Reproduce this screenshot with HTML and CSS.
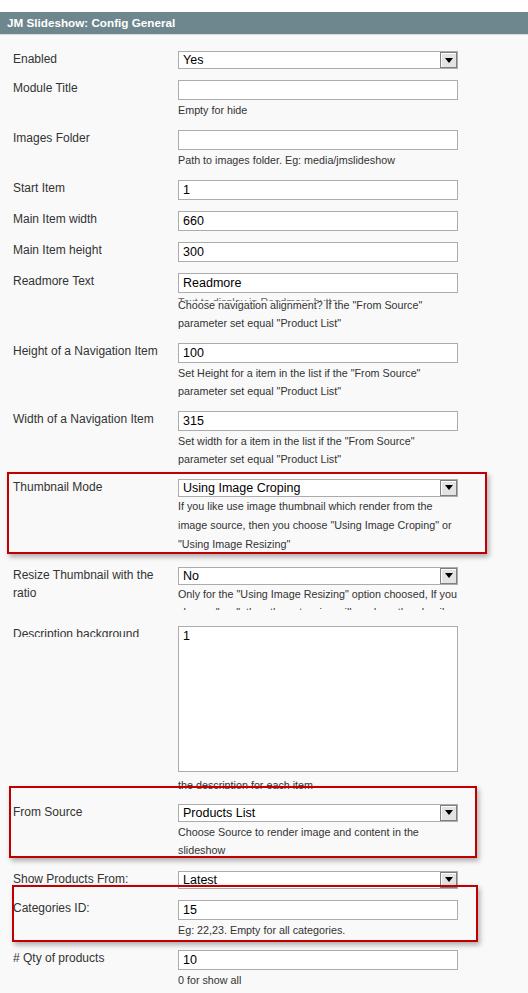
FILE: index.html
```html
<!DOCTYPE html>
<html lang="en">
<head>
    <meta charset="UTF-8">
    <meta name="viewport" content="width=device-width, initial-scale=1.0">
    <title>JM Slideshow: Config General</title>
    <link rel="stylesheet" href="styles.css">
</head>
<body>
<div class="page">
    <div class="section-head">JM Slideshow: Config General</div>

    <div class="form">
        <div class="row">
            <label class="label">Enabled</label>
            <div class="value">
                <div class="select"><span class="select-text">Yes</span><span class="arrow"><svg width="8" height="5" viewBox="0 0 8 5"><path d="M0 0H8L4 5Z" fill="#000"/></svg></span></div>
            </div>
        </div>

        <div class="row">
            <label class="label">Module Title</label>
            <div class="value">
                <input class="input" type="text" value="">
                <div class="hint">Empty for hide</div>
            </div>
        </div>

        <div class="row">
            <label class="label">Images Folder</label>
            <div class="value">
                <input class="input" type="text" value="">
                <div class="hint">Path to images folder. Eg: media/jmslideshow</div>
            </div>
        </div>

        <div class="row">
            <label class="label">Start Item</label>
            <div class="value"><input class="input" type="text" value="1"></div>
        </div>

        <div class="row">
            <label class="label">Main Item width</label>
            <div class="value"><input class="input" type="text" value="660"></div>
        </div>

        <div class="row">
            <label class="label">Main Item height</label>
            <div class="value"><input class="input" type="text" value="300"></div>
        </div>

        <div class="row">
            <label class="label">Readmore Text</label>
            <div class="value">
                <input class="input" type="text" value="Readmore">
                <div class="hint hint-stack">
                    <span class="hint-ghost">Text to display in Readmore button</span>
                    Choose navigation alignment? If the "From Source"<br>parameter set equal "Product List"
                </div>
            </div>
        </div>

        <div class="row">
            <label class="label">Height of a Navigation Item</label>
            <div class="value">
                <input class="input" type="text" value="100">
                <div class="hint">Set Height for a item in the list if the "From Source"<br>parameter set equal "Product List"</div>
            </div>
        </div>

        <div class="row">
            <label class="label">Width of a Navigation Item</label>
            <div class="value">
                <input class="input" type="text" value="315">
                <div class="hint">Set width for a item in the list if the "From Source"<br>parameter set equal "Product List"</div>
            </div>
        </div>

        <div class="row">
            <label class="label">Thumbnail Mode</label>
            <div class="value">
                <div class="select"><span class="select-text">Using Image Croping</span><span class="arrow"><svg width="8" height="5" viewBox="0 0 8 5"><path d="M0 0H8L4 5Z" fill="#000"/></svg></span></div>
                <div class="hint hint-loose">If you like use image thumbnail which render from the<br>image source, then you choose "Using Image Croping" or<br>"Using Image Resizing"</div>
            </div>
        </div>

        <div class="row row-clipped">
            <label class="label">Resize Thumbnail with the ratio</label>
            <div class="value">
                <div class="select"><span class="select-text">No</span><span class="arrow"><svg width="8" height="5" viewBox="0 0 8 5"><path d="M0 0H8L4 5Z" fill="#000"/></svg></span></div>
                <div class="hint hint-cut">Only for the "Using Image Resizing" option choosed, If you<br>choose "yes", then the extension will render a thumbnail</div>
            </div>
        </div>

        <div class="row row-desc">
            <label class="label label-cut">Description background</label>
            <div class="value">
                <textarea class="textarea">1</textarea>
                <div class="hint hint-desc">the description for each item</div>
            </div>
        </div>

        <div class="row">
            <label class="label">From Source</label>
            <div class="value">
                <div class="select"><span class="select-text">Products List</span><span class="arrow"><svg width="8" height="5" viewBox="0 0 8 5"><path d="M0 0H8L4 5Z" fill="#000"/></svg></span></div>
                <div class="hint hint-two">Choose Source to render image and content in the<br>slideshow</div>
            </div>
        </div>

        <div class="row">
            <label class="label">Show Products From:</label>
            <div class="value">
                <div class="select"><span class="select-text">Latest</span><span class="arrow"><svg width="8" height="5" viewBox="0 0 8 5"><path d="M0 0H8L4 5Z" fill="#000"/></svg></span></div>
            </div>
        </div>

        <div class="row">
            <label class="label">Categories ID:</label>
            <div class="value">
                <input class="input" type="text" value="15">
                <div class="hint">Eg: 22,23. Empty for all categories.</div>
            </div>
        </div>

        <div class="row">
            <label class="label"># Qty of products</label>
            <div class="value">
                <input class="input" type="text" value="10">
                <div class="hint">0 for show all</div>
            </div>
        </div>
    </div>

    <!-- red annotation frames -->
    <div class="mark mark-thumb"></div>
    <div class="mark mark-source"></div>
    <div class="mark mark-cats"></div>
</div>
</body>
</html>
```

FILE: styles.css
```css
body {
    margin: 0;
    background: #f9f9f9;
    font-family: "Liberation Sans", Arial, sans-serif;
    color: #333;
}

.page {
    position: relative;
    min-height: 993px;
    padding-top: 12px;
    box-sizing: border-box;
    background: linear-gradient(#fff 0, #fff 12px, #f9f9f9 12px);
}

/* Заголовок секции */
.section-head {
    height: 22px;
    line-height: 22px;
    padding-left: 7px;
    background: #6e868e;
    border-bottom: 1px solid #dadada;
    color: #fff;
    font-size: 11.7px;
    font-weight: bold;
}

.form {
    padding: 16px 0 0 13px;
}

.row {
    display: grid;
    grid-template-columns: 165px 280px;
    margin-bottom: 11px;
}

.row-clipped {
    margin-bottom: 16px;
}

.row-desc {
    margin-bottom: 15px;
}

.label {
    margin-top: -1px;
    font-size: 12px;
    line-height: 18px;
    color: #333;
}

.label-cut {
    height: 12px;
    overflow: hidden;
}

.input {
    display: block;
    width: 280px;
    height: 20px;
    margin: 0;
    padding: 0 4px;
    box-sizing: border-box;
    border: 1px solid #acacac;
    background: #fff;
    font-family: "Liberation Sans", Arial, sans-serif;
    font-size: 12.5px;
    color: #000;
    outline: none;
}

.textarea {
    display: block;
    width: 280px;
    height: 146px;
    margin: 0;
    padding: 2px 4px;
    box-sizing: border-box;
    border: 1px solid #acacac;
    background: #fff;
    font-family: "Liberation Sans", Arial, sans-serif;
    font-size: 12.5px;
    color: #000;
    resize: none;
}

/* Выпадающий список */
.select {
    display: flex;
    width: 280px;
    height: 18px;
    box-sizing: border-box;
    border: 1px solid #acacac;
    background: #fff;
    font-size: 12.5px;
    color: #000;
}

.select-text {
    flex: 1;
    padding-left: 4px;
    line-height: 16px;
}

.arrow {
    display: flex;
    align-items: center;
    justify-content: center;
    width: 17px;
    height: 16px;
    box-sizing: border-box;
    border: 1px solid #7f7f7f;
    background: #e3e3e3;
    box-shadow: inset 1px 1px 0 #fff;
}

.hint {
    padding-top: 1px;
    font-size: 10.75px;
    line-height: 18px;
    color: #333;
    white-space: nowrap;
}

.hint-loose {
    padding-top: 0;
    line-height: 19px;
    padding-bottom: 2px;
}

.hint-two {
    padding-bottom: 1px;
}

.hint-stack {
    position: relative;
    padding-top: 2.5px;
}

.hint-ghost {
    position: absolute;
    left: 0;
    top: 0;
    height: 8px;
    overflow: hidden;
    color: #666;
}

.hint-cut {
    height: 25px;
    padding-top: 0;
    line-height: 18.5px;
    overflow: hidden;
}

.hint-desc {
    height: 17px;
    padding-top: 4px;
    box-sizing: border-box;
    overflow: hidden;
}

/* Красные рамки поверх формы */
.mark {
    position: absolute;
    box-sizing: border-box;
    border: 2px solid #c00000;
    box-shadow: 2px 3px 5px rgba(0, 0, 0, 0.3);
    pointer-events: none;
}

.mark-thumb {
    left: 7px;
    top: 472px;
    width: 480px;
    height: 82px;
}

.mark-source {
    left: 9px;
    top: 786px;
    width: 468px;
    height: 72px;
}

.mark-cats {
    left: 12px;
    top: 885px;
    width: 466px;
    height: 57px;
}
```
